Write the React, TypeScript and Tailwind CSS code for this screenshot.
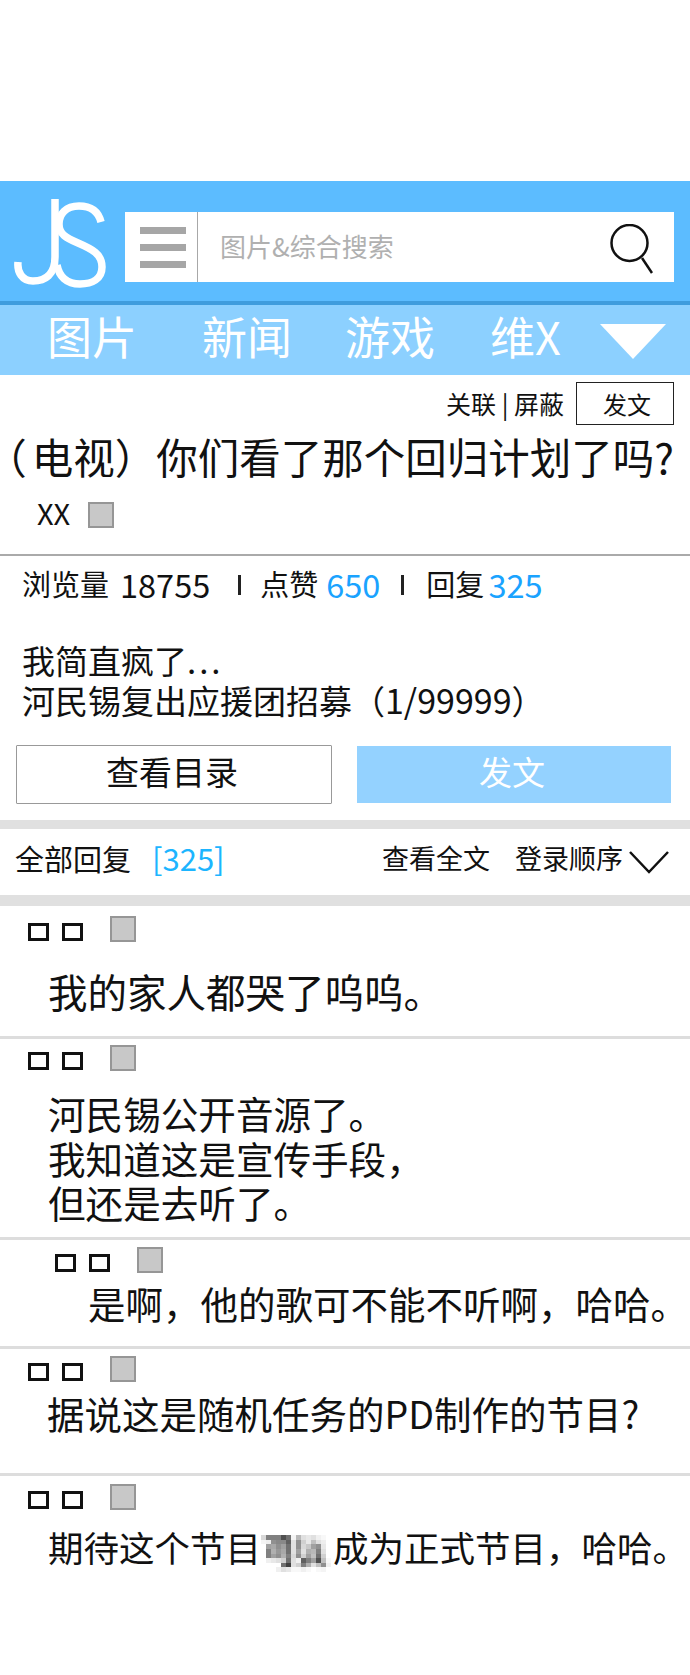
const mosaic = [
  ['d8', '80', '80', '80', '50', '70', 'f4', 'b8', 'e0', 'e8', 'e0', 'f0', 'f8', 'ff'],
  ['f4', 'ee', '90', '88', '88', '60', 'e0', '90', 'd0', 'e8', 'c0', 'e0', 'ee', 'ff'],
  ['ff', 'a0', 'a8', '90', 'a0', '70', 'e0', '90', 'd8', 'c8', 'a0', '90', 'e8', 'ff'],
  ['ff', '80', 'b0', '98', 'a8', '70', 'e0', 'a0', 'e0', 'b0', 'b8', '80', 'e0', 'ff'],
  ['ff', '80', 'a0', '90', 'b0', '80', 'd8', '90', 'd0', 'a0', 'c0', '70', 'd0', 'ff'],
  ['ff', 'f0', 'e8', 'e0', 'd0', '70', 'e0', 'f0', '60', '80', 'a0', '50', 'c0', 'f8'],
  ['ff', 'ff', 'ff', 'ff', '70', '40', 'e0', 'd0', '80', 'b0', 'e0', 'c0', '90', 'f0'],
  ['ff', 'ff', 'ff', 'f0', 'e0', 'e8', 'f8', 'f8', 'f0', 'f8', 'ff', 'f8', 'f4', 'ff'],
]

const Mosaic = () => (
  <svg width="70" height="37" viewBox="0 0 70 37" className="inline-block align-[-10px] mr-[2px]" shapeRendering="crispEdges">
    {mosaic.map((row, y) =>
      row.map((c, x) => <rect key={`${x}-${y}`} x={x * 5} y={y * 4.625} width="5" height="4.7" fill={`#${c}${c}${c}`} />)
    )}
  </svg>
)

const Avatar = () => <div className="w-[26px] h-[26px] bg-[#c8c8c8] border-2 border-[#969696]" />

const Marks = () => (
  <div className="flex items-start">
    <div className="w-[21px] h-[18px] mt-[7px] border-[3px] border-[#111]" />
    <div className="w-[21px] h-[18px] mt-[7px] ml-[13px] border-[3px] border-[#111]" />
    <div className="ml-[27px]">
      <Avatar />
    </div>
  </div>
)

const App = () => {
  return (
    <div className="w-[690px] h-[1675px] bg-white text-[#111] pt-[181px] font-['Noto_Sans_CJK_SC','Liberation_Sans',sans-serif] overflow-hidden">
      <div className="flex items-end h-[120px] bg-[#5cbcff]">
        <svg width="110" height="100" viewBox="0 0 110 100" className="ml-[10px] mb-[6px]" fill="none" stroke="#fff" strokeWidth="7.5">
          <path d="M45 4 V62 C45 80 35 86 23 86 C12 86 7 77 8 67" />
          <path d="M91 27 C88 15 79 11 69 11 C56 11 49 19 49 29 C49 39 56 43 68 48 C82 54 92 59 92 72 C92 84 82 89 70 89 C56 89 49 81 47 70" />
        </svg>
        <div className="flex h-[70px] w-[549px] ml-[5px] mb-[19px] bg-white">
          <div className="flex flex-col justify-center gap-[10px] w-[73px] pl-[15px] border-r border-[#a8a8a8]">
            <div className="w-[46px] h-[7px] bg-[#a6a6a6]" />
            <div className="w-[46px] h-[7px] bg-[#a6a6a6]" />
            <div className="w-[46px] h-[7px] bg-[#a6a6a6]" />
          </div>
          <div className="flex flex-1 items-center justify-between pl-[22px] pr-[21px]">
            <span className="text-[26px] -mt-[3px] text-[#b0b0b0]">图片&综合搜索</span>
            <svg width="43" height="50" viewBox="0 0 43 50" fill="none" stroke="#111" strokeWidth="2.5" className="mt-[4px]">
              <circle cx="19.5" cy="19" r="18" />
              <path d="M32 34 L42 49" />
            </svg>
          </div>
        </div>
      </div>
      <div className="h-[4px] bg-[#3f9cdd]" />
      <div className="flex items-center h-[70px] bg-[#8cd0ff] pl-[47px] text-white text-[45px]">
        <span className="-mt-[9px]">图片</span>
        <span className="-mt-[9px] ml-[65px]">新闻</span>
        <span className="-mt-[9px] ml-[53px]">游戏</span>
        <span className="-mt-[9px] ml-[55px]">维X</span>
        <svg width="66" height="35" viewBox="0 0 66 35" fill="#fff" className="ml-auto mt-[2px] mr-[24px]">
          <path d="M0 0 H66 L33 35 Z" />
        </svg>
      </div>

      <div className="flex items-center justify-end h-[43px] mt-[7px] pr-[16px] text-[25px]">
        <span>关联 | 屏蔽</span>
        <button className="w-[98px] h-[43px] ml-[12px] pl-[4px] text-[24px] border border-[#222]">发文</button>
      </div>
      <h1 className="h-[56px] mt-[3px] pl-[6px] text-[41.5px] leading-[56px] whitespace-nowrap">
        <span className="[font-feature-settings:'halt'] tracking-[5px]">（</span>电视）你们看了那个回归计划了吗?
      </h1>
      <div className="flex items-center h-[30px] mt-[14px] pl-[37px]">
        <span className="text-[29px]">XX</span>
        <div className="ml-[18px] mt-[3px]">
          <Avatar />
        </div>
      </div>
      <div className="h-[2px] mt-[26px] bg-[#aaaaaa]" />

      <div className="flex items-center h-[40px] mt-[8px] pl-[22px] text-[29px] whitespace-nowrap">
        <span>浏览量</span>
        <span className="ml-[11px] text-[32.5px]">18755</span>
        <span className="ml-[28px] mt-[2px] w-[3px] h-[20px] bg-[#222]" />
        <span className="ml-[19px]">点赞</span>
        <span className="ml-[8px] text-[32.5px] text-[#1aa3ff]">650</span>
        <span className="ml-[21px] mt-[2px] w-[3px] h-[20px] bg-[#222]" />
        <span className="ml-[22px]">回复</span>
        <span className="ml-[4px] text-[32.5px] text-[#1aa3ff]">325</span>
      </div>
      <div className="mt-[37px] pl-[22px] text-[33px] leading-[39px]">
        <p>
          我简直疯了<span className="tracking-[3px]">...</span>
        </p>
        <p>
          河民锡复出应援团招募（<span className="text-[34px]">1/99999</span>）
        </p>
      </div>

      <div className="flex items-center mt-[25px] pl-[16px]">
        <button className="w-[316px] h-[59px] pr-[4px] pb-[6px] text-[33px] border border-[#999] rounded-[1px]">查看目录</button>
        <button className="w-[314px] h-[57px] ml-[25px] pr-[4px] pb-[6px] text-[33px] text-white bg-[#94d2ff]">发文</button>
      </div>
      <div className="h-[9px] mt-[16px] bg-[#e0e0e0]" />
      <div className="flex items-center h-[66px] pl-[15px] pr-[21px]">
        <span className="-mt-[7px] text-[29px]">全部回复</span>
        <span className="-mt-[7px] ml-[21px] text-[31px] text-[#1cb5ff]">[325]</span>
        <span className="-mt-[7px] ml-auto text-[27px]">查看全文</span>
        <span className="-mt-[7px] ml-[25px] text-[27px]">登录顺序</span>
        <svg width="40" height="24" viewBox="0 0 40 24" fill="none" stroke="#111" strokeWidth="2.5" className="ml-[6px]">
          <path d="M1 2 L20 22 L39 2" />
        </svg>
      </div>
      <div className="h-[11px] bg-[#e0e0e0]" />

      <section className="h-[130px] pt-[10px] pl-[28px]">
        <Marks />
        <p className="mt-[24px] pl-[20px] text-[39.5px] leading-[50px]">我的家人都哭了呜呜。</p>
      </section>
      <div className="h-[3px] bg-[#dddddd]" />
      <section className="h-[198px] pt-[6px] pl-[28px]">
        <Marks />
        <div className="mt-[20px] pl-[20px] text-[37.6px] leading-[44.5px]">
          <p>河民锡公开音源了。</p>
          <p>我知道这是宣传手段，</p>
          <p>但还是去听了。</p>
        </div>
      </section>
      <div className="h-[3px] bg-[#dddddd]" />
      <section className="h-[106px] pt-[7px] pl-[55px]">
        <Marks />
        <p className="mt-[5px] pl-[33px] text-[37.5px] leading-[50px] whitespace-nowrap">是啊，他的歌可不能不听啊，哈哈。</p>
      </section>
      <div className="h-[3px] bg-[#dddddd]" />
      <section className="h-[124px] pt-[7px] pl-[28px]">
        <Marks />
        <p className="mt-[6px] pl-[19px] text-[37.5px] leading-[50px] whitespace-nowrap">据说这是随机任务的PD制作的节目?</p>
      </section>
      <div className="h-[3px] bg-[#dddddd]" />
      <section className="pt-[8px] pl-[28px]">
        <Marks />
        <p className="mt-[12px] pl-[20px] text-[35.5px] leading-[50px] whitespace-nowrap">
          期待这个节目
          <Mosaic />
          成为正式节目，哈哈。
        </p>
      </section>
    </div>
  )
}

export default App
